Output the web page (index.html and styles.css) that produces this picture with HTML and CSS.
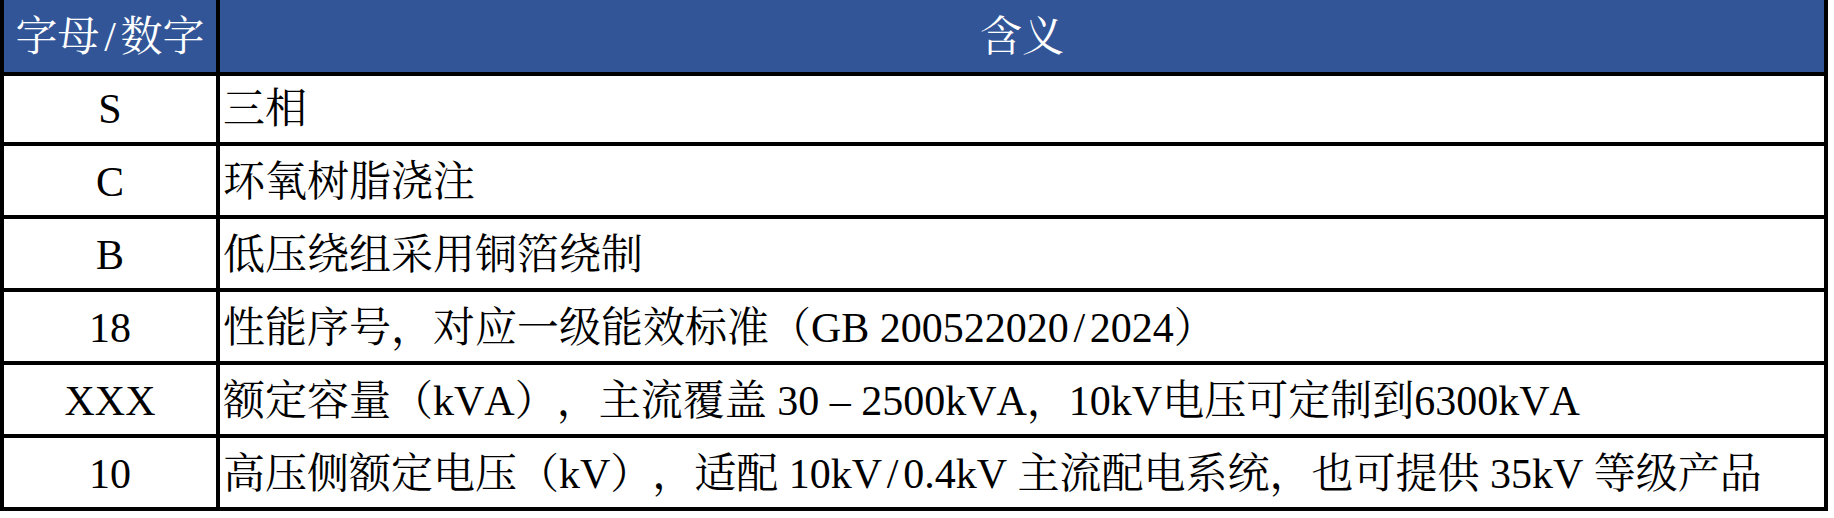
FILE: index.html
```html
<!DOCTYPE html>
<html lang="zh-CN">
<head>
<meta charset="utf-8">
<title>型号含义</title>
<link rel="stylesheet" href="styles.css">
</head>
<body>
<div class="table">
  <div class="cell head code">字母<span class="hw">/</span>数字</div>
  <div class="cell head desc">含义</div>

  <div class="cell code">S</div>
  <div class="cell desc">三相</div>

  <div class="cell code">C</div>
  <div class="cell desc">环氧树脂浇注</div>

  <div class="cell code">B</div>
  <div class="cell desc">低压绕组采用铜箔绕制</div>

  <div class="cell code">18</div>
  <div class="cell desc">性能序号，对应一级能效标准（GB 200522020<span class="hw">/</span>2024）</div>

  <div class="cell code">XXX</div>
  <div class="cell desc">额定容量（kVA），主流覆盖 30 – 2500kVA，10kV电压可定制到6300kVA</div>

  <div class="cell code">10</div>
  <div class="cell desc">高压侧额定电压（kV），适配 10kV<span class="hw">/</span>0.4kV 主流配电系统，也可提供 35kV 等级产品</div>
</div>
</body>
</html>
```

FILE: styles.css
```css
html, body {
  margin: 0;
  padding: 0;
  background: #ffffff;
}

.table {
  display: grid;
  grid-template-columns: 216px 1fr;
  grid-auto-rows: 73px;
  width: 1828px;
  box-sizing: border-box;
  border-left: 4px solid #000;
  border-right: 4px solid #000;
  font-family: "Liberation Serif", "Noto Serif CJK SC", "Noto Sans CJK SC", serif;
  font-size: 42px;
  line-height: 1;
  color: #000;
  font-kerning: none;
  text-spacing-trim: space-all;
}

.cell {
  box-sizing: border-box;
  display: flex;
  align-items: center;
  border-bottom: 4px solid #000;
  padding-top: 3px;
  white-space: nowrap;
}

.code {
  justify-content: center;
  border-right: 4px solid #000;
}

.desc {
  justify-content: flex-start;
  padding-left: 3px;
}

.head {
  height: 76px;
  background: #325597;
  color: #ffffff;
  padding-top: 2px;
}

.head.desc {
  justify-content: center;
  padding-left: 0;
}

.hw {
  display: inline-block;
  width: 0.5em;
  text-align: center;
}
```
